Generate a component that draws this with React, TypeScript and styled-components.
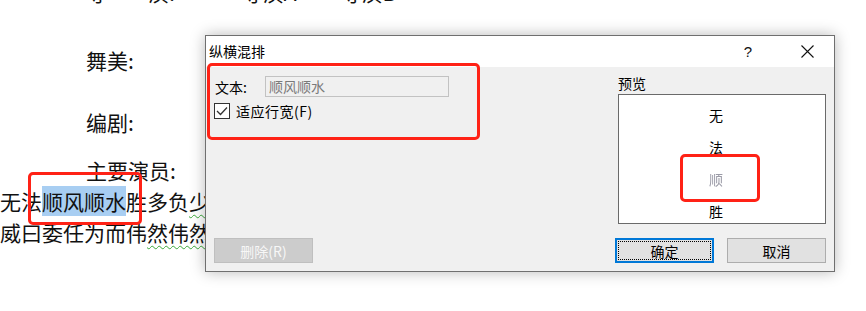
import React from 'react'
import styled, { createGlobalStyle } from 'styled-components'

const GlobalStyle = createGlobalStyle`
  html, body {
    margin: 0;
    padding: 0;
    background: #ffffff;
  }
  body {
    font-family: "Noto Sans CJK SC", "Noto Sans", sans-serif;
  }
`

const cjk = `"Noto Sans CJK SC", "Noto Sans", sans-serif`

interface DocLineProps {
  $top: number
  $indent?: number
}

const App: React.FC = () => {
  return (
    <Page>
      <GlobalStyle />
      <Document>
        <DocLine $top={-23} $indent={86}>
          <Word>导</Word>
          <Word $gap={41}>演:</Word>
          <Word $gap={67}>导演A</Word>
          <Word $gap={44}>导演B</Word>
        </DocLine>
        <DocLine $top={38} $indent={86}>舞美:</DocLine>
        <DocLine $top={32} $indent={86}>编剧:</DocLine>
        <DocLine $top={18} $indent={86}>主要演员:</DocLine>
        <DocLine $top={1}>
          无法<Highlight>顺风顺水</Highlight>胜多负<Squiggle>少年年</Squiggle>
        </DocLine>
        <DocLine $top={1}>
          威曰委任为而伟<Squiggle>然伟然年</Squiggle>
        </DocLine>
      </Document>

      <Dialog>
        <TitleBar>
          <Title>纵横混排</Title>
          <TitleButtons>
            <HelpButton>?</HelpButton>
            <CloseButton>
              <svg width="13" height="13" viewBox="0 0 13 13">
                <path d="M0.5 0.5 L12.5 12.5 M12.5 0.5 L0.5 12.5" stroke="#111" strokeWidth="1.1" />
              </svg>
            </CloseButton>
          </TitleButtons>
        </TitleBar>
        <Body>
          <TopArea>
            <Form>
              <FieldRow>
                <FieldLabel>文本:</FieldLabel>
                <TextInput>顺风顺水</TextInput>
              </FieldRow>
              <FieldRow>
                <CheckBox>
                  <svg width="12" height="10" viewBox="0 0 12 10">
                    <polyline points="1,5 4.5,8.5 11,1.5" fill="none" stroke="#333" strokeWidth="1.3" />
                  </svg>
                </CheckBox>
                <CheckLabel>适应行宽(F)</CheckLabel>
              </FieldRow>
            </Form>
            <PreviewColumn>
              <PreviewLabel>预览</PreviewLabel>
              <PreviewBox>
                <PreviewChar>无</PreviewChar>
                <PreviewChar>法</PreviewChar>
                <PreviewChar $faded>顺</PreviewChar>
                <PreviewChar>胜</PreviewChar>
              </PreviewBox>
            </PreviewColumn>
          </TopArea>
          <ButtonBar>
            <Button $variant="disabled">删除(R)</Button>
            <ButtonGroup>
              <Button $variant="default">确定</Button>
              <Button>取消</Button>
            </ButtonGroup>
          </ButtonBar>
        </Body>
      </Dialog>

      <Marker style={{ left: 28, top: 172, width: 114, height: 53 }} />
      <Marker style={{ left: 207, top: 63, width: 273, height: 77 }} />
      <Marker style={{ left: 680, top: 154, width: 80, height: 48 }} />
    </Page>
  )
}

const Page = styled.div`
  position: relative;
  width: 866px;
  height: 311px;
  overflow: hidden;
  background: #ffffff;
`

const Document = styled.div`
  display: flex;
  flex-direction: column;
  font-family: ${cjk};
  font-size: 21px;
  color: #111;
`

const DocLine = styled.div<DocLineProps>`
  display: flex;
  align-items: center;
  height: 30px;
  line-height: 30px;
  white-space: nowrap;
  margin-top: ${(p) => p.$top}px;
  padding-left: ${(p) => p.$indent ?? 0}px;
`

const Word = styled.span<{ $gap?: number }>`
  margin-left: ${(p) => p.$gap ?? 0}px;
`

const Highlight = styled.span`
  background: #a8cef2;
`

const Squiggle = styled.span`
  text-decoration-line: underline;
  text-decoration-style: wavy;
  text-decoration-color: #3aa83a;
  text-decoration-thickness: 1px;
  text-underline-offset: 4px;
`

const Dialog = styled.div`
  position: absolute;
  left: 205px;
  top: 35px;
  width: 630px;
  height: 237px;
  box-sizing: border-box;
  border: 1px solid #6f6f6f;
  background: #f0f0f0;
  box-shadow: 0 0 14px rgba(0, 0, 0, 0.28);
  display: flex;
  flex-direction: column;
  font-family: ${cjk};
  font-size: 14px;
  color: #000;
`

const TitleBar = styled.div`
  height: 31px;
  background: #ffffff;
  display: flex;
  align-items: center;
  justify-content: space-between;
  padding-left: 3px;
`

const Title = styled.div`
  font-size: 14px;
  margin-top: -1px;
`

const TitleButtons = styled.div`
  display: flex;
  align-items: center;
  height: 100%;
`

const HelpButton = styled.div`
  width: 46px;
  display: flex;
  justify-content: center;
  font-family: "Liberation Sans", sans-serif;
  font-size: 15px;
  color: #111;
  margin-right: 13px;
`

const CloseButton = styled.div`
  width: 46px;
  display: flex;
  justify-content: center;
  align-items: center;
  margin-right: 4px;
`

const Body = styled.div`
  flex: 1;
  display: flex;
  flex-direction: column;
  justify-content: space-between;
  padding: 7px 8px 8px 8px;
`

const TopArea = styled.div`
  display: flex;
  justify-content: space-between;
`

const Form = styled.div`
  display: flex;
  flex-direction: column;
  gap: 3px;
  margin-top: 2px;
`

const FieldRow = styled.div`
  display: flex;
  align-items: center;
  height: 21px;
`

const FieldLabel = styled.span`
  width: 50px;
  padding-left: 1px;
`

const TextInput = styled.div`
  width: 184px;
  height: 21px;
  box-sizing: border-box;
  border: 1px solid #c2c2c2;
  background: #f0f0f0;
  color: #7a7a7a;
  padding-left: 3px;
  line-height: 19px;
`

const CheckBox = styled.div`
  width: 16px;
  height: 16px;
  box-sizing: border-box;
  border: 1px solid #333;
  background: #ffffff;
  display: flex;
  align-items: center;
  justify-content: center;
`

const CheckLabel = styled.span`
  margin-left: 6px;
  letter-spacing: 0.5px;
`

const PreviewColumn = styled.div`
  display: flex;
  flex-direction: column;
  width: 208px;
`

const PreviewLabel = styled.div`
  height: 18px;
  line-height: 18px;
  margin-bottom: 2px;
`

const PreviewBox = styled.div`
  height: 130px;
  box-sizing: border-box;
  border: 1px solid #6a6a6a;
  background: #ffffff;
  display: flex;
  flex-direction: column;
  align-items: center;
  padding: 4px 12px 0 0;
  overflow: hidden;
`

const PreviewChar = styled.div<{ $faded?: boolean }>`
  height: 32px;
  line-height: 32px;
  font-size: 14px;
  color: ${(p) => (p.$faded ? '#9a9aa6' : '#000')};
  filter: ${(p) => (p.$faded ? 'blur(0.4px)' : 'none')};
`

const ButtonBar = styled.div`
  display: flex;
  justify-content: space-between;
  align-items: center;
`

const ButtonGroup = styled.div`
  display: flex;
  gap: 13px;
`

const Button = styled.div<{ $variant?: 'default' | 'disabled' }>`
  position: relative;
  width: 99px;
  height: 25px;
  box-sizing: border-box;
  display: flex;
  align-items: center;
  justify-content: center;
  font-size: 14px;
  background: ${(p) => (p.$variant === 'disabled' ? '#cccccc' : '#e1e1e1')};
  color: ${(p) => (p.$variant === 'disabled' ? '#f7f7f7' : '#000')};
  border: ${(p) =>
    p.$variant === 'default'
      ? '2px solid #0078d7'
      : p.$variant === 'disabled'
      ? '1px solid #bfbfbf'
      : '1px solid #adadad'};

  &::after {
    content: '';
    display: ${(p) => (p.$variant === 'default' ? 'block' : 'none')};
    position: absolute;
    inset: 1px;
    border: 1px dotted #000;
  }
`

const Marker = styled.div`
  position: absolute;
  box-sizing: border-box;
  border: 3.5px solid #ff2216;
  border-radius: 5px;
  pointer-events: none;
`

export default App
